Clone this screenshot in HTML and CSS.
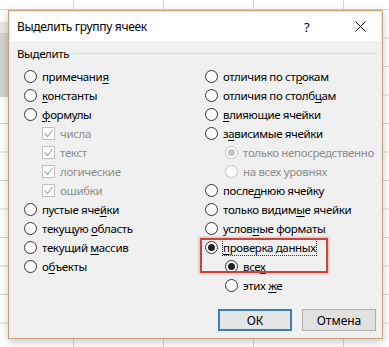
FILE: index.html
```html
<!DOCTYPE html>
<html lang="ru">
<head>
<meta charset="utf-8">
<title>Выделить группу ячеек</title>
<link rel="stylesheet" href="styles.css">
</head>
<body>
<div class="dialog">
  <div class="titlebar">
    <span class="title">Выделить группу ячеек</span>
    <span class="help">?</span>
    <svg class="close" width="11" height="11" viewBox="0 0 11 11"><path d="M0.5 0.5 L10.5 10.5 M10.5 0.5 L0.5 10.5" stroke="#111" stroke-width="1" fill="none"/></svg>
  </div>
  <div class="content">
    <div class="group-head"><span>Выделить</span><span class="rule"></span></div>
    <div class="cols">
      <div class="col">
        <div class="opt"><span class="radio"></span><span>примечани<u>я</u></span></div>
        <div class="opt"><span class="radio"></span><span><u>к</u>онстанты</span></div>
        <div class="opt"><span class="radio"></span><span><u>ф</u>ормулы</span></div>
        <div class="opt sub dis"><span class="check"><svg width="11" height="11" viewBox="0 0 11 11"><path d="M1.5 5.5 L4.5 8.5 L9.5 2" stroke="#a8a8a8" stroke-width="1.2" fill="none"/></svg></span><span>числа</span></div>
        <div class="opt sub dis"><span class="check"><svg width="11" height="11" viewBox="0 0 11 11"><path d="M1.5 5.5 L4.5 8.5 L9.5 2" stroke="#a8a8a8" stroke-width="1.2" fill="none"/></svg></span><span>текст</span></div>
        <div class="opt sub dis"><span class="check"><svg width="11" height="11" viewBox="0 0 11 11"><path d="M1.5 5.5 L4.5 8.5 L9.5 2" stroke="#a8a8a8" stroke-width="1.2" fill="none"/></svg></span><span>логические</span></div>
        <div class="opt sub dis"><span class="check"><svg width="11" height="11" viewBox="0 0 11 11"><path d="M1.5 5.5 L4.5 8.5 L9.5 2" stroke="#a8a8a8" stroke-width="1.2" fill="none"/></svg></span><span>ошибки</span></div>
        <div class="opt"><span class="radio"></span><span>пустые яче<u>й</u>ки</span></div>
        <div class="opt"><span class="radio"></span><span>текущую <u>о</u>бласть</span></div>
        <div class="opt"><span class="radio"></span><span>текущий <u>м</u>ассив</span></div>
        <div class="opt"><span class="radio"></span><span>о<u>б</u>ъекты</span></div>
      </div>
      <div class="col">
        <div class="opt"><span class="radio"></span><span>отличия по ст<u>р</u>окам</span></div>
        <div class="opt"><span class="radio"></span><span>отличия по столб<u>ц</u>ам</span></div>
        <div class="opt"><span class="radio"></span><span><u>в</u>лияющие ячейки</span></div>
        <div class="opt"><span class="radio"></span><span>з<u>а</u>висимые ячейки</span></div>
        <div class="opt sub2 dis"><span class="radio on"></span><span>только непосредственно</span></div>
        <div class="opt sub2 dis"><span class="radio"></span><span>на всех уровнях</span></div>
        <div class="opt"><span class="radio"></span><span>после<u>д</u>нюю ячейку</span></div>
        <div class="opt"><span class="radio"></span><span>только видим<u>ы</u>е ячейки</span></div>
        <div class="opt"><span class="radio"></span><span>услов<u>н</u>ые форматы</span></div>
        <div class="marked">
          <div class="opt"><span class="radio on"></span><span class="focus"><u>п</u>роверка данных</span></div>
          <div class="opt sub2"><span class="radio on"></span><span>все<u>х</u></span></div>
        </div>
        <div class="opt sub2"><span class="radio"></span><span>этих <u>ж</u>е</span></div>
      </div>
    </div>
    <div class="buttons">
      <button class="btn default">ОК</button>
      <button class="btn">Отмена</button>
    </div>
  </div>
</div>
</body>
</html>
```

FILE: styles.css
```css
html, body {
  margin: 0;
}
body {
  width: 389px;
  height: 347px;
  overflow: hidden;
  box-sizing: border-box;
  padding: 10px 0 0 8px;
  background-color: #ffffff;
  background-image:
    linear-gradient(#d2d2d2, #d2d2d2),
    linear-gradient(#e6e6e6, #e6e6e6),
    linear-gradient(to right, #d6d6d6 1px, transparent 1px),
    linear-gradient(to bottom, #d6d6d6 1px, transparent 1px);
  background-repeat: no-repeat, no-repeat, repeat, repeat;
  background-size: 8px 64px, 8px 11px, 90px 100%, 100% 28.5px;
  background-position: 0 33px, 0 22px, 73px 0, 0 9px;
  font-family: "Noto Sans", "Open Sans", sans-serif;
  font-size: 11.5px;
  letter-spacing: -0.35px;
  color: #000;
}
.dialog {
  width: 375px;
  height: 329px;
  box-sizing: border-box;
  border: 1px solid #c4a47c;
  padding: 1px;
  background: #fbe8d0;
  box-shadow: 0 3px 8px rgba(0, 0, 0, 0.22);
  display: flex;
  flex-direction: column;
}
.titlebar {
  height: 29px;
  flex: none;
  background: #ffffff;
  display: flex;
  align-items: center;
  padding-left: 7px;
}
.title {
  font-size: 12px;
  letter-spacing: -0.3px;
  flex: 1;
}
.help {
  font-size: 13px;
  width: 12px;
  margin-right: 39px;
}
.close {
  margin-right: 15px;
}
.content {
  flex: 1;
  background: #f0f0f0;
  display: flex;
  flex-direction: column;
  padding: 4px 3px 0 7px;
}
.group-head {
  display: flex;
  align-items: center;
  gap: 5px;
  height: 16px;
}
.rule {
  flex: 1;
  height: 1px;
  background: #d9d9d9;
}
.cols {
  display: grid;
  grid-template-columns: 181px 1fr;
  margin: 6px 0 0 7px;
}
.opt {
  display: flex;
  align-items: center;
  gap: 5px;
  height: 19px;
  white-space: nowrap;
}
.opt u {
  text-decoration: underline;
  text-underline-offset: 2px;
}
.opt.sub {
  padding-left: 18px;
}
.opt.sub2 {
  padding-left: 20px;
}
.opt.dis {
  color: #8c8c8c;
}
.radio {
  width: 13px;
  height: 13px;
  box-sizing: border-box;
  border: 1px solid #333;
  border-radius: 50%;
  background: #fff;
  flex: none;
  display: flex;
  align-items: center;
  justify-content: center;
}
.radio.on::after {
  content: "";
  width: 7px;
  height: 7px;
  border-radius: 50%;
  background: #222;
}
.dis .radio {
  border-color: #c2c2c2;
}
.dis .radio.on::after {
  background: #c4c4c4;
}
.check {
  width: 13px;
  height: 13px;
  box-sizing: border-box;
  border: 1px solid #c2c2c2;
  background: #fff;
  flex: none;
  display: flex;
  align-items: center;
  justify-content: center;
}
.marked {
  position: relative;
}
.marked::after {
  content: "";
  position: absolute;
  left: -5px;
  top: 0;
  width: 128px;
  height: 35px;
  box-sizing: border-box;
  border: 2px solid #c9453b;
  box-shadow: 0 0 2px 1px rgba(220, 110, 100, 0.45);
}
.focus {
  outline: 1px dotted #333;
  outline-offset: 0;
}
.buttons {
  margin-top: auto;
  margin-bottom: 6px;
  display: flex;
  justify-content: flex-end;
  gap: 10px;
  padding-right: 2px;
}
.btn {
  width: 74px;
  height: 22px;
  box-sizing: border-box;
  border: 1px solid #adadad;
  background: #e1e1e1;
  font-family: inherit;
  font-size: 12px;
  letter-spacing: 0;
  color: #000;
  padding: 0;
}
.btn.default {
  border: 2px solid #3b7fba;
  background: #e5e5e5;
}
```
